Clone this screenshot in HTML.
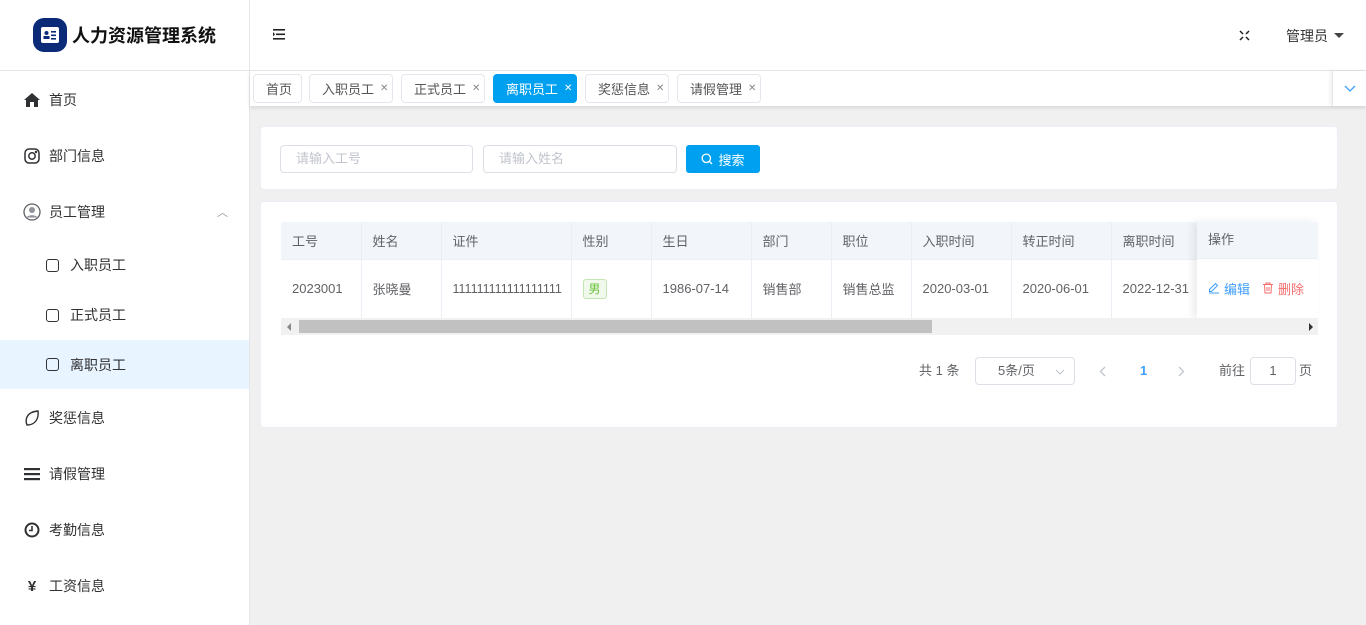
<!DOCTYPE html>
<html><head><meta charset="utf-8"><style>
*{box-sizing:border-box;margin:0;padding:0}
body{width:1366px;height:625px;overflow:hidden;font-family:"Liberation Sans","Noto Sans CJK SC",sans-serif;font-size:14px;color:#303133;background:#f0f0f0;position:relative}
.side{position:absolute;left:0;top:0;width:250px;height:625px;background:#fff;border-right:1px solid #e6e6e6}
.logo{height:71px;border-bottom:1px solid #e6e6e6;display:flex;align-items:center;justify-content:center;font-size:18px;font-weight:bold;color:#111}
.logo .ic{width:34px;height:34px;border-radius:11px;background:#0b2a78;margin-right:5px;display:flex;align-items:center;justify-content:center}
.mi{position:absolute;left:0;width:249px;display:flex;align-items:center;font-size:14px;color:#303133}
.mi .i{width:18px;height:18px;margin-left:23px;margin-right:8px;display:flex;align-items:center;justify-content:center}
.box{width:13px;height:13px;border:1.5px solid #303133;border-radius:3px;margin-left:46px;margin-right:11px}
.head{position:absolute;left:250px;top:0;right:0;height:71px;background:#fff;border-bottom:1px solid #e6e6e6}
.tabs{position:absolute;left:250px;top:71px;right:0;height:35px;background:#fff;box-shadow:0 2px 4px rgba(0,0,0,.1)}
.tab{position:absolute;top:3px;height:29px;border:1px solid #e4e7ed;border-radius:4px;font-size:13px;color:#555;display:flex;align-items:center;padding-left:12px}
.tab .x{margin-left:6px;color:#888;font-size:10px}
.tab.on{background:#00a0f0;border-color:#00a0f0;color:#fff}
.tab.on .x{color:#fff}
.card{position:absolute;left:260px;right:28px;background:#fff;border-radius:4px;border:1px solid #ebeef5}
.inp{position:absolute;top:18px;height:28px;border:1px solid #dcdfe6;border-radius:4px;font-size:13px;color:#c0c4cc;padding-left:15px;line-height:26px}
.btn{position:absolute;left:425px;top:18px;width:74px;height:28px;background:#00a0f0;border-radius:3px;color:#fff;font-size:13px;display:flex;align-items:center;justify-content:center}
table{border-collapse:collapse;position:absolute;left:20px;top:20px;font-size:13px;table-layout:fixed}
th{height:37px;background:#f2f6fa;color:#606266;font-weight:normal;text-align:left;padding-left:11px;border-right:1px solid #ebeef5;border-bottom:1px solid #ebeef5}
td{height:59px;padding-left:11px;color:#606266;border-right:1px solid #ebeef5;border-bottom:1px solid #ebeef5}
.fix{position:absolute;left:936px;top:20px;width:121px;height:96px;background:#fff;box-shadow:-4px 0 8px rgba(0,0,0,.08)}
.pg{position:absolute;top:155px;height:28px;line-height:28px;font-size:13px;color:#606266;display:flex;align-items:center}
</style></head><body>
<div class="side">
 <div class="logo"><div class="ic"><svg width="18" height="16" viewBox="0 0 18 16"><rect x="0" y="0" width="18" height="16" rx="2" fill="#fff"/><circle cx="5.5" cy="6" r="2" fill="#0b2a78"/><rect x="2.5" y="9" width="6" height="3" fill="#0b2a78"/><rect x="10" y="4" width="5" height="1.6" fill="#0b2a78"/><rect x="10" y="7.5" width="5" height="1.6" fill="#0b2a78"/><rect x="10" y="11" width="5" height="1.6" fill="#0b2a78"/></svg></div>人力资源管理系统</div>
 <div class="mi" style="top:88px;height:24px"><span class="i"><svg width="16" height="14" viewBox="0 0 16 14"><path d="M8 0L0 7h2v7h4V9h4v5h4V7h2z" fill="#303133"/></svg></span>首页</div>
 <div class="mi" style="top:144px;height:24px"><span class="i"><svg width="16" height="16" viewBox="0 0 16 16" fill="none" stroke="#303133" stroke-width="1.5"><rect x="1" y="1" width="14" height="14" rx="4"/><circle cx="8" cy="8" r="3.2"/><circle cx="12" cy="4" r=".5" fill="#303133"/></svg></span>部门信息</div>
 <div class="mi" style="top:200px;height:24px"><span class="i"><svg width="18" height="18" viewBox="0 0 18 18"><circle cx="9" cy="9" r="8" fill="none" stroke="#606266" stroke-width="1.3"/><circle cx="9" cy="7" r="3" fill="#909399"/><path d="M3.5 14.5c1.5-3 9.5-3 11 0" fill="#909399"/></svg></span>员工管理<span style="position:absolute;left:217px;color:#909399;font-size:11px">︿</span></div>
 <div class="mi" style="top:253px;height:24px"><span class="box"></span>入职员工</div>
 <div class="mi" style="top:303px;height:24px"><span class="box"></span>正式员工</div>
 <div class="mi" style="top:340px;height:49px;background:#e8f4ff"><span class="box"></span>离职员工</div>
 <div class="mi" style="top:406px;height:24px"><span class="i"><svg width="16" height="16" viewBox="0 0 16 16"><path d="M3 15C1 10 2 2 14 1c1 8-3 14-11 14z" fill="none" stroke="#303133" stroke-width="1.4"/></svg></span>奖惩信息</div>
 <div class="mi" style="top:462px;height:24px"><span class="i"><svg width="16" height="14" viewBox="0 0 16 14"><rect y="1" width="16" height="2.2" fill="#303133"/><rect y="6" width="16" height="2.2" fill="#303133"/><rect y="11" width="16" height="2.2" fill="#303133"/></svg></span>请假管理</div>
 <div class="mi" style="top:518px;height:24px"><span class="i"><svg width="16" height="16" viewBox="0 0 16 16"><circle cx="8" cy="8" r="6.5" fill="none" stroke="#303133" stroke-width="2"/><path d="M8 4v4.5H5" stroke="#303133" stroke-width="1.6" fill="none"/></svg></span>考勤信息</div>
 <div class="mi" style="top:574px;height:24px"><span class="i" style="font-weight:bold;font-size:15px">¥</span>工资信息</div>
</div>
<div class="head">
 <svg style="position:absolute;left:23px;top:29px" width="13" height="11" viewBox="0 0 13 11"><rect x="0" y="0" width="12" height="1.6" fill="#222"/><rect x="3" y="4.5" width="9" height="1.6" fill="#222"/><rect x="0" y="9" width="12" height="1.6" fill="#222"/><path d="M0 3l2 2.3L0 7.5z" fill="#222"/></svg>
 <svg style="position:absolute;left:989px;top:30px" width="11" height="11" viewBox="0 0 11 11" stroke="#222" stroke-width="1.5"><path d="M1 1l3 3M10 1L7 4M1 10l3-3M10 10L7 7"/></svg>
 <span style="position:absolute;left:1036px;top:26px;font-size:14px;color:#333">管理员</span>
 <span style="position:absolute;left:1084px;top:33px;border:5px solid transparent;border-top:5px solid #444;width:0;height:0"></span>
</div>
<div class="tabs">
 <div class="tab" style="left:3px;width:49px">首页</div>
 <div class="tab" style="left:59px;width:84px">入职员工<span class="x">✕</span></div>
 <div class="tab" style="left:151px;width:84px">正式员工<span class="x">✕</span></div>
 <div class="tab on" style="left:243px;width:84px">离职员工<span class="x">✕</span></div>
 <div class="tab" style="left:335px;width:84px">奖惩信息<span class="x">✕</span></div>
 <div class="tab" style="left:427px;width:84px">请假管理<span class="x">✕</span></div>
 <div style="position:absolute;left:1082px;top:0;width:34px;height:35px;border-left:1px solid #e6e6e6;box-shadow:-2px 0 4px rgba(0,0,0,.06);display:flex;align-items:center;justify-content:center"><svg width="12" height="8" viewBox="0 0 12 8"><path d="M1 1l5 5 5-5" stroke="#409eff" stroke-width="1.3" fill="none"/></svg></div>
</div>
<div class="card" style="top:126px;height:64px">
 <div class="inp" style="left:19px;width:193px">请输入工号</div>
 <div class="inp" style="left:222px;width:194px">请输入姓名</div>
 <div class="btn"><svg width="12" height="12" viewBox="0 0 12 12" style="margin-right:5px"><circle cx="5.3" cy="5.3" r="4.2" stroke="#fff" stroke-width="1.3" fill="none"/><path d="M8.3 8.3L11 11" stroke="#fff" stroke-width="1.3"/></svg>搜索</div>
</div>
<div class="card" style="top:201px;height:227px">
 <table>
  <colgroup><col style="width:80px"><col style="width:80px"><col style="width:130px"><col style="width:80px"><col style="width:100px"><col style="width:80px"><col style="width:80px"><col style="width:100px"><col style="width:100px"><col style="width:100px"><col style="width:7px"></colgroup>
  <tr><th>工号</th><th>姓名</th><th>证件</th><th>性别</th><th>生日</th><th>部门</th><th>职位</th><th>入职时间</th><th>转正时间</th><th>离职时间</th><th></th></tr>
  <tr><td>2023001</td><td>张晓曼</td><td style="font-size:12.5px">111111111111111111</td><td><span style="display:inline-block;background:#f0f9eb;border:1px solid #c2e7b0;color:#67c23a;font-size:12px;padding:0 5px;height:20px;line-height:18px;border-radius:3px">男</span></td><td>1986-07-14</td><td>销售部</td><td>销售总监</td><td>2020-03-01</td><td>2020-06-01</td><td>2022-12-31</td><td></td></tr>
 </table>
 <div class="fix"><div style="height:37px;background:#f2f6fa;border-bottom:1px solid #ebeef5;padding-left:11px;line-height:36px;font-size:13px;color:#606266">操作</div>
 <div style="padding-left:11px;height:58px;display:flex;align-items:center;font-size:13px"><svg width="12" height="12" viewBox="0 0 12 12" style="margin-right:4px"><path d="M7.5 1.5l2 2-6 6H1.5v-2zM1 11h10" stroke="#409eff" stroke-width="1" fill="none"/></svg><span style="color:#409eff">编辑</span><svg width="12" height="12" viewBox="0 0 12 12" style="margin:0 4px 0 12px"><path d="M1 2.5h10M4 2.5V1h4v1.5M2.5 2.5l.5 8.5h6l.5-8.5M5 5v4M7 5v4" stroke="#f56c6c" stroke-width="1" fill="none"/></svg><span style="color:#f56c6c">删除</span></div></div>
 <div style="position:absolute;left:20px;top:116px;width:1037px;height:17px;background:#f1f1f1">
  <span style="position:absolute;left:6px;top:5px;border:4px solid transparent;border-right:4px solid #888;border-left:0"></span>
  <div style="position:absolute;left:18px;top:2px;width:633px;height:13px;background:#c1c1c1"></div>
  <span style="position:absolute;right:5px;top:5px;border:4px solid transparent;border-left:4px solid #333;border-right:0"></span>
 </div>
 <span class="pg" style="left:658px">共 1 条</span>
 <div style="position:absolute;left:714px;top:155px;width:100px;height:28px;border:1px solid #dcdfe6;border-radius:4px;font-size:13px;color:#606266;line-height:26px;padding-left:22px">5条/页<svg style="position:absolute;right:9px;top:11px" width="10" height="6" viewBox="0 0 10 6"><path d="M1 1l4 4 4-4" stroke="#c0c4cc" fill="none"/></svg></div>
 <span class="pg" style="left:838px"><svg width="7" height="11" viewBox="0 0 7 11"><path d="M6 1L1.5 5.5 6 10" stroke="#c0c4cc" stroke-width="1.3" fill="none"/></svg></span>
 <span class="pg" style="left:879px;color:#409eff;font-weight:bold">1</span>
 <span class="pg" style="left:917px"><svg width="7" height="11" viewBox="0 0 7 11"><path d="M1 1l4.5 4.5L1 10" stroke="#c0c4cc" stroke-width="1.3" fill="none"/></svg></span>
 <span class="pg" style="left:958px">前往</span>
 <div style="position:absolute;left:989px;top:155px;width:46px;height:28px;border:1px solid #dcdfe6;border-radius:4px;text-align:center;line-height:26px;font-size:13px;color:#606266">1</div>
 <span class="pg" style="left:1038px">页</span>
</div>
</body></html>
